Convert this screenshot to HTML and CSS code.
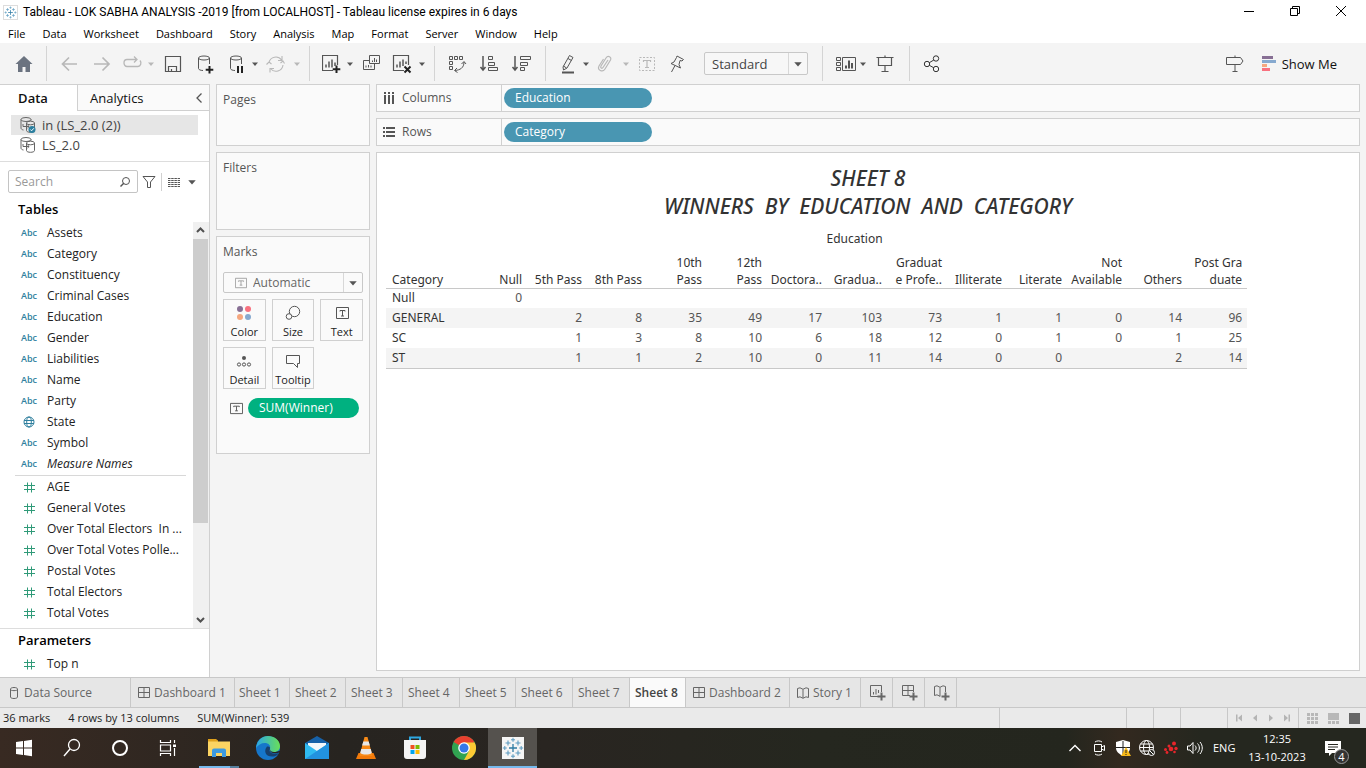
FILE: index.html
```html
<!DOCTYPE html>
<html lang="en">
<head>
<meta charset="utf-8">
<title>Tableau - LOK SABHA ANALYSIS -2019</title>
<link rel="stylesheet" href="styles.css">
</head>
<body>
<svg class="defs" aria-hidden="true">
  <symbol id="caret" viewBox="0 0 8 8"><path d="M1 2.500h6L4 6z" fill="currentColor"/></symbol>
  <symbol id="hash" viewBox="0 0 14 14"><path d="M5.500 2.500v10M9.500 2.500v10M2 5.500h11M2 9.500h11" stroke="#2f9a78" fill="none"/></symbol>
  <symbol id="tbox" viewBox="0 0 14 14"><path d="M.5 1.500h13v11H.5zM4 5.500V4.500h6v1M7 4.500v5M5.500 9.500h3" fill="none" stroke="currentColor"/></symbol>
  <symbol id="dash" viewBox="0 0 12 12"><path d="M.5.500h11v10H.5zM6 .5v10M.5 5.500h11" fill="none" stroke="currentColor"/></symbol>
  <symbol id="book" viewBox="0 0 12 12"><path d="M.5 1.500L3 .8l3 1.500 3-1.500 2.500.7v9L9 9.800l-3 1.500-3-1.500-2.500.7zM6 2.500v8.500" fill="none" stroke="currentColor"/></symbol>
  <symbol id="ds" viewBox="0 0 18 18"><g fill="none" stroke="#666"><ellipse cx="7" cy="3.500" rx="5" ry="2"/><path d="M2 3.500v8.500c0 1 1 1.800 2.500 2M12 3.500v1"/><ellipse cx="11.500" cy="7" rx="4" ry="1.800"/><path d="M7.500 7v7.500c0 2.400 8 2.400 8 0V7M4 10.500h6M8.500 9l1.700 1.500L8.500 12M4 8v2.500"/></g></symbol>
  <symbol id="logo" viewBox="0 0 22 22"><g fill="none"><path d="M11 7v8M7 11h8" stroke="#2f7ba3" stroke-width="1.300"/><path d="M6 3.500v5M3.500 6h5M16 3.500v5M13.500 6h5M6 13.500v5M3.500 16h5M16 13.500v5M13.500 16h5" stroke="#5b9abf" stroke-width="1.100"/><path d="M11 .8v4M9 2.800h4M11 17.200v4M9 19.200h4M.8 11h4M2.800 9v4M17.200 11h4M19.200 9v4" stroke="#5b9abf"/></g></symbol>
</svg>

<header class="titlebar">
  <svg class="applogo" viewBox="0 0 22 22"><use href="#logo"/></svg>
  <h1 class="wintitle">Tableau - LOK SABHA ANALYSIS -2019 [from LOCALHOST] - Tableau license expires in 6 days</h1>
  <div class="winbtns">
    <button aria-label="Minimize"><svg viewBox="0 0 12 12"><path d="M1 6.500h10" stroke="#000"/></svg></button>
    <button aria-label="Restore"><svg viewBox="0 0 12 12"><path d="M1.500 3.500h7v7h-7zM3.500 3.500v-2h7v7h-2" fill="none" stroke="#000"/></svg></button>
    <button aria-label="Close"><svg viewBox="0 0 12 12"><path d="M1 1l10 10M11 1L1 11" stroke="#000"/></svg></button>
  </div>
</header>
<nav class="menubar">
  <button>File</button><button>Data</button><button>Worksheet</button><button>Dashboard</button><button>Story</button><button>Analysis</button><button>Map</button><button>Format</button><button>Server</button><button>Window</button><button>Help</button>
</nav>

<div class="toolbar">
  <button aria-label="Home"><svg viewBox="0 0 20 20"><path d="M10 2L1.500 10H4v8h4.500v-5h3v5H16v-8h2.500z" fill="#6b7380"/></svg></button>
  <span class="sep g12"></span>
  <button class="g12 off" aria-label="Undo"><svg viewBox="0 0 20 20"><path d="M18 10H3.500M10 3.500L3.500 10l6.500 6.500" stroke-width="1.700"/></svg></button>
  <button class="g12 off" aria-label="Redo"><svg viewBox="0 0 20 20"><path d="M3 10h14.500M11.500 3.500L18 10l-6.500 6.500" stroke-width="1.700"/></svg></button>
  <button class="g12 off" aria-label="Replay"><svg viewBox="0 0 20 20"><path d="M7 5.500H4a3 3.500 0 0 0 0 7h11a3 3.500 0 0 0 2-6M7 5.500h6M11 2.500l3 3-3 3" stroke-width="1.300"/></svg></button>
  <svg class="caret g4 off"><use href="#caret"/></svg>
  <button class="g8" aria-label="Save"><svg viewBox="0 0 20 20"><path d="M2.500 2.500h15v15h-15zM5.500 17.500v-5h8v5M8.500 17.500v-2.500" stroke-width="1.200"/></svg></button>
  <button class="g12" aria-label="New data source"><svg viewBox="0 0 20 20"><ellipse cx="9" cy="4" rx="5.500" ry="2"/><path d="M3.500 4v10.500c0 1 2 2 4.500 2M14.500 4v6"/><path d="M14.500 12v7.500M10.700 15.700h7.600" stroke="#222" stroke-width="2"/></svg></button>
  <button class="g12" aria-label="Pause updates"><svg viewBox="0 0 20 20"><ellipse cx="9" cy="4" rx="5.500" ry="2"/><path d="M3.500 4v10.500c0 1 2 2 4.500 2M14.500 4v6"/><path d="M11 12v7M15 12v7" stroke="#222" stroke-width="2"/></svg></button>
  <svg class="caret g4"><use href="#caret"/></svg>
  <button class="g6 off" aria-label="Refresh"><svg viewBox="0 0 20 20"><path d="M4 8.500a7 7 0 0 1 12.500-2.500M18 11a7 7 0 0 1-12.500 3.500M17 2v4.500h-4M5 18.500v-4h4M15.500 9l2.500-2 1.500 2.500M1.500 10.500L4 8l2.500 2" stroke-width="1.100"/></svg></button>
  <svg class="caret g8 off"><use href="#caret"/></svg>
  <span class="sep g8"></span>
  <button class="g12" aria-label="New worksheet"><svg viewBox="0 0 20 20"><path d="M10.500 17.500h-11M-.5 17.500" stroke="none"/><path d="M11 16.500H.5v-15h15V11" stroke-width="1.200"/><path d="M4 13.500v-3M7 13.500v-6M10 13.500v-8M13 12V8.500" stroke-width="1.500"/><path d="M14.500 11.500V19M10.700 15.300h7.600" stroke="#222" stroke-width="2"/></svg></button>
  <svg class="caret g4"><use href="#caret"/></svg>
  <button class="g6" aria-label="Duplicate"><svg viewBox="0 0 20 20"><path d="M9.500 1.500h10v8h-10zM9.500 6.500h-6v9h11v-6M12.500 8V6.500M14.500 8V4M16.500 8V5.500M6 13.500v-2M8.500 13.500V11M11 13.500v-2"/></svg></button>
  <button class="g12" aria-label="Clear sheet"><svg viewBox="0 0 20 20"><path d="M12 16.500H1.500v-15h15V11" stroke-width="1.200"/><path d="M5 13.500v-3M8 13.500v-6M11 12V5.500M14 10V7.500" stroke-width="1.500"/><path d="M12.500 12.500l6 6M18.500 12.500l-6 6" stroke="#222" stroke-width="2"/></svg></button>
  <svg class="caret g6"><use href="#caret"/></svg>
  <span class="sep g8"></span>
  <button class="g12" aria-label="Swap rows and columns"><svg viewBox="0 0 20 20"><path d="M2.500 2.500h3v3h-3zM7.500 2.500h3v3h-3zM12.500 2.500h3v3h-3zM2.500 7.500h3v3h-3zM2.500 12.500h3v3h-3zM17 8c0 6-4 8-9 8.500M14.500 10L17 7.500l2 2.500M10 14l-2.500 2.500 3 2"/></svg></button>
  <button class="g12" aria-label="Sort ascending"><svg viewBox="0 0 20 20"><path d="M4 2v14M1.500 13L4 16l2.500-3" stroke-width="1.500"/><path d="M9.500 2.500h4v3h-4zM9.500 8.500h6v3h-6zM9.500 13.500h9v3h-9z"/></svg></button>
  <button class="g12" aria-label="Sort descending"><svg viewBox="0 0 20 20"><path d="M4 2v14M1.500 13L4 16l2.500-3" stroke-width="1.500"/><path d="M9.500 2.500h10v3h-10zM9.500 8.500h7v3h-7zM9.500 13.500h4v3h-4z"/></svg></button>
  <span class="sep g14"></span>
  <button class="g12" aria-label="Highlight"><svg viewBox="0 0 20 20"><path d="M5 13l6.500-11.500 3.500 2L9 14l-3.500 2zM5.500 12l3 2M10 4.500l3.500 2"/><path d="M4 18.500h12" stroke-width="2"/></svg></button>
  <svg class="caret g4"><use href="#caret"/></svg>
  <button class="g6 off" aria-label="Group"><svg viewBox="0 0 20 20"><path d="M12 6l-5 7.500c-1 1.500-3 .5-2-1.500L10 4c2-3 6-1 4.500 2L9 15c-2.500 4-8 1-6-3l4.500-7" stroke-width="1.200"/></svg></button>
  <svg class="caret g6 off"><use href="#caret"/></svg>
  <button class="g6 off" aria-label="Show mark labels"><svg viewBox="0 0 20 20"><path d="M3.500 3.500h15v13h-15z" stroke-dasharray="2 1.500"/><path d="M7.500 8V6.500h7V8M11 6.500v7M9 13.500h4" stroke-width="1.200"/></svg></button>
  <button class="g12" aria-label="Fix axes"><svg viewBox="0 0 20 20"><path d="M9 2l6.500 3.500-1.500 1.500-2-.5-1 4 1.500 3.500-9.500-4.500 3-1.500L8.500 3.500zM7 11.500L3.500 18"/></svg></button>
  <label class="fit g16"><select aria-label="Fit"><option>Standard</option></select><svg class="caret big"><use href="#caret"/></svg></label>
  <span class="sep g14"></span>
  <button class="g12 wide" aria-label="Show or hide cards"><svg viewBox="0 0 22 20"><path d="M1.500 3.500h4v3h-4zM1.500 8.500h4v3h-4zM1.500 13.500h4v3h-4zM7.500 3.500h13v13h-13z"/><path d="M11 14.500v-3M14 14.500v-8M17 14.500V9" stroke-width="2"/></svg></button>
  <svg class="caret g2"><use href="#caret"/></svg>
  <button class="g8" aria-label="Presentation mode"><svg viewBox="0 0 20 20"><path d="M1.500 3.500h17M3.500 3.500v8h13v-8M10 1.500v2M10 11.500v6M6.500 17.500h7" stroke-width="1.200"/></svg></button>
  <span class="sep g14"></span>
  <button class="g12 dark" aria-label="Share"><svg viewBox="0 0 20 20"><circle cx="5" cy="10" r="2.700"/><circle cx="14" cy="4.500" r="2.700"/><circle cx="14" cy="15" r="2.700"/><path d="M7.300 8.700l4.500-2.700M7.300 11.300l4.500 2.500"/></svg></button>
  <button class="guide" aria-label="Guide"><svg viewBox="0 0 20 20"><path d="M2.500 3.500h14l2.500 3.500-2.500 3.500h-14zM11 1.500v2M11 10.500v7M8.500 17.500h5"/></svg></button>
  <button class="showme"><svg viewBox="0 0 14 16"><path d="M0 0h11v3H0z" fill="#876f94"/><path d="M0 4h14v3H0z" fill="#86a9cf"/><path d="M0 8h5v3H0z" fill="#f5a77f"/><path d="M0 12h8v3H0z" fill="#f8717f"/></svg>Show Me</button>
</div>

<main class="work">
  <aside class="side">
    <div class="sidetabs"><button class="on">Data</button><button class="ana">Analytics<svg viewBox="0 0 8 12"><path d="M6.500 1.500L2 6l4.500 4.500" fill="none" stroke="#555" stroke-width="1.300"/></svg></button></div>
    <ul class="sources">
      <li class="sel"><svg viewBox="0 0 18 18"><use href="#ds"/><circle cx="13" cy="13.500" r="3.500" fill="#2b7f9f"/><path d="M11.300 13.500l1.300 1.300 2.200-2.500" fill="none" stroke="#fff"/></svg>in (LS_2.0 (2))</li>
      <li><svg viewBox="0 0 18 18"><use href="#ds"/></svg>LS_2.0</li>
    </ul>
    <div class="find">
      <label class="search"><input type="text" placeholder="Search" aria-label="Search"><svg viewBox="0 0 12 12"><path d="M5 7L1.500 10.500" stroke="#555" stroke-width="1.400"/><circle cx="7" cy="5" r="3.500" fill="none" stroke="#555"/></svg></label>
      <button aria-label="Filter"><svg viewBox="0 0 14 14"><path d="M1 1.500h12L8.500 7v5.500h-3V7z" fill="none" stroke="#555"/></svg></button>
      <span class="fsep"></span>
      <button class="viewas" aria-label="View options"><svg viewBox="0 0 14 12"><path d="M1 2.500h12M1 4.500h12M1 6.500h12M1 8.500h12M1 10.500h12" stroke="#555" stroke-dasharray="2.500 .7"/></svg></button>
      <svg class="caret big"><use href="#caret"/></svg>
    </div>
    <h2>Tables</h2>
    <div class="scroller">
      <div class="fields">
        <ul>
          <li><b>Abc</b>Assets</li><li><b>Abc</b>Category</li><li><b>Abc</b>Constituency</li><li><b>Abc</b>Criminal Cases</li><li><b>Abc</b>Education</li><li><b>Abc</b>Gender</li><li><b>Abc</b>Liabilities</li><li><b>Abc</b>Name</li><li><b>Abc</b>Party</li>
          <li><svg viewBox="0 0 14 14"><g fill="none" stroke="#2f7f9e"><circle cx="7" cy="7" r="5"/><ellipse cx="7" cy="7" rx="2.300" ry="5"/><path d="M2 5.500h10M2 8.500h10"/></g></svg>State</li>
          <li><b>Abc</b>Symbol</li><li><b>Abc</b><i>Measure Names</i></li>
        </ul>
        <ul class="measures">
          <li><svg viewBox="0 0 14 14"><use href="#hash"/></svg>AGE</li><li><svg viewBox="0 0 14 14"><use href="#hash"/></svg>General Votes</li><li><svg viewBox="0 0 14 14"><use href="#hash"/></svg>Over Total Electors&nbsp; In ...</li><li><svg viewBox="0 0 14 14"><use href="#hash"/></svg>Over Total Votes Polle...</li><li><svg viewBox="0 0 14 14"><use href="#hash"/></svg>Postal Votes</li><li><svg viewBox="0 0 14 14"><use href="#hash"/></svg>Total Electors</li><li><svg viewBox="0 0 14 14"><use href="#hash"/></svg>Total Votes</li>
        </ul>
      </div>
      <div class="bar" aria-hidden="true">
        <svg viewBox="0 0 15 17"><path d="M4 10l3.500-3.500L11 10" fill="none" stroke="#505050" stroke-width="2"/></svg>
        <span class="thumb"></span>
        <svg viewBox="0 0 15 17"><path d="M4 7l3.500 3.500L11 7" fill="none" stroke="#505050" stroke-width="2"/></svg>
      </div>
    </div>
    <div class="params">
      <h2>Parameters</h2>
      <ul><li><svg viewBox="0 0 14 14"><use href="#hash"/></svg>Top n</li></ul>
    </div>
  </aside>

  <div class="cards">
    <section class="card pages"><h3>Pages</h3></section>
    <section class="card filters"><h3>Filters</h3></section>
    <section class="card marks">
      <h3>Marks</h3>
      <label class="marktype"><svg class="ic" viewBox="0 0 14 14"><use href="#tbox"/></svg><select aria-label="Mark type"><option>Automatic</option></select><svg class="caret big"><use href="#caret"/></svg></label>
      <div class="markgrid">
        <button><svg viewBox="0 0 20 18"><circle cx="6" cy="5" r="3" fill="#876f94"/><circle cx="14" cy="5" r="3" fill="#f8717f"/><circle cx="6" cy="13" r="3" fill="#f5a77f"/><circle cx="14" cy="13" r="3" fill="#86a9cf"/></svg>Color</button>
        <button><svg viewBox="0 0 20 18"><g fill="none" stroke="#555"><circle cx="11.500" cy="7.500" r="5.200"/><circle cx="6" cy="12.500" r="2.800" fill="#fafafa"/></g></svg>Size</button>
        <button><svg viewBox="0 0 20 18"><g fill="none" stroke="#555"><path d="M4.500 3.500h12v11h-12zM8 7.500v-1h5v1M10.500 6.500v5.500M9 12h3"/></g></svg>Text</button>
        <button><svg viewBox="0 0 20 18"><circle cx="10" cy="6" r="2" fill="#555"/><g fill="none" stroke="#555"><circle cx="5" cy="12.500" r="1.600"/><circle cx="10" cy="12.500" r="1.600"/><circle cx="15" cy="12.500" r="1.600"/></g></svg>Detail</button>
        <button><svg viewBox="0 0 20 18"><path d="M3.500 3.500h13v8h-2v4l-4-4h-7z" fill="none" stroke="#555"/></svg>Tooltip</button>
      </div>
      <div class="markpill"><svg viewBox="0 0 14 14"><use href="#tbox"/></svg><button class="pill green">SUM(Winner)</button></div>
    </section>
  </div>

  <div class="canvas">
    <div class="shelf"><div class="shelfname"><svg viewBox="0 0 12 12"><path d="M1 0h2v2H1zM5 0h2v2H5zM9 0h2v2H9zM1 3h2v9H1zM5 3h2v9H5zM9 3h2v9H9z" fill="#555"/></svg>Columns</div><button class="pill">Education</button></div>
    <div class="shelf"><div class="shelfname"><svg viewBox="0 0 12 12"><path d="M0 1h2v2H0zM0 5h2v2H0zM0 9h2v2H0zM3 1h9v2H3zM3 5h9v2H3zM3 9h9v2H3z" fill="#555"/></svg>Rows</div><button class="pill">Category</button></div>
    <section class="sheet">
      <h2>SHEET 8<br>WINNERS&nbsp; BY&nbsp; EDUCATION&nbsp; AND&nbsp; CATEGORY</h2>
      <table>
        <colgroup><col class="c0"><col span="13"></colgroup>
        <thead>
          <tr class="top"><td></td><th colspan="13">Education</th></tr>
          <tr><th class="l">Category</th><th>Null</th><th>5th Pass</th><th>8th Pass</th><th>10th<br>Pass</th><th>12th<br>Pass</th><th>Doctora..</th><th>Gradua..</th><th>Graduat<br>e Profe..</th><th>Illiterate</th><th>Literate</th><th>Not<br>Available</th><th>Others</th><th>Post Gra<br>duate</th></tr>
        </thead>
        <tbody>
          <tr><th>Null</th><td>0</td><td></td><td></td><td></td><td></td><td></td><td></td><td></td><td></td><td></td><td></td><td></td><td></td></tr>
          <tr><th>GENERAL</th><td></td><td>2</td><td>8</td><td>35</td><td>49</td><td>17</td><td>103</td><td>73</td><td>1</td><td>1</td><td>0</td><td>14</td><td>96</td></tr>
          <tr><th>SC</th><td></td><td>1</td><td>3</td><td>8</td><td>10</td><td>6</td><td>18</td><td>12</td><td>0</td><td>1</td><td>0</td><td>1</td><td>25</td></tr>
          <tr><th>ST</th><td></td><td>1</td><td>1</td><td>2</td><td>10</td><td>0</td><td>11</td><td>14</td><td>0</td><td>0</td><td></td><td>2</td><td>14</td></tr>
        </tbody>
      </table>
    </section>
  </div>
</main>

<nav class="tabs">
  <button class="src"><svg viewBox="0 0 12 12"><path d="M2.500 2c0-2 7-2 7 0v8c0 2-7 2-7 0zM2.500 2.500c0 1.500 7 1.500 7 0" fill="none" stroke="currentColor"/></svg>Data Source</button>
  <button class="dash"><svg viewBox="0 0 12 12"><use href="#dash"/></svg>Dashboard 1</button>
  <button class="s1">Sheet 1</button><button>Sheet 2</button><button>Sheet 3</button><button>Sheet 4</button><button>Sheet 5</button><button>Sheet 6</button><button>Sheet 7</button><button class="on">Sheet 8</button>
  <button class="dash"><svg viewBox="0 0 12 12"><use href="#dash"/></svg>Dashboard 2</button>
  <button class="story"><svg viewBox="0 0 12 12"><use href="#book"/></svg>Story 1</button>
  <button class="add" aria-label="New worksheet"><svg viewBox="0 0 16 16"><path d="M8 11.500H.5V.5h11V7M3.500 9.500V7M6 9.500V4M8.500 8V5" fill="none" stroke="currentColor"/><path d="M11.500 7.500v8M7.500 11.500h8" stroke="currentColor" stroke-width="2"/></svg></button>
  <button class="add" aria-label="New dashboard"><svg viewBox="0 0 16 16"><path d="M8 10.500H.5V.5h11V7M6 .5v10M.5 5.500h11" fill="none" stroke="currentColor"/><path d="M11.500 7.500v8M7.500 11.500h8" stroke="currentColor" stroke-width="2"/></svg></button>
  <button class="add" aria-label="New story"><svg viewBox="0 0 16 16"><path d="M6 11.300L3 9.800l-2.500.7v-9L3 .8l3 1.500L9 .8l2.500.7V7M6 2.500v9" fill="none" stroke="currentColor"/><path d="M11.500 7.500v8M7.500 11.500h8" stroke="currentColor" stroke-width="2"/></svg></button>
</nav>

<footer class="status">
  <span>36 marks</span><span>4 rows by 13 columns</span><span>SUM(Winner): 539</span>
  <div class="boxes"><i class="b1"></i><i class="b2"></i><i class="b2"></i><i class="b3"></i>
    <div class="step">
      <button aria-label="First"><svg viewBox="0 0 8 8"><path d="M1 .5h1.500v7H1zM7 .5v7L3 4z"/></svg></button>
      <button aria-label="Previous"><svg viewBox="0 0 8 8"><path d="M6 .5v7L2 4z"/></svg></button>
      <button aria-label="Next"><svg viewBox="0 0 8 8"><path d="M2 .5v7L6 4z"/></svg></button>
      <button aria-label="Last"><svg viewBox="0 0 8 8"><path d="M1 .5v7L5 4zM5.500.5H7v7H5.500z"/></svg></button>
    </div>
    <div class="views">
      <button aria-label="Sheet sorter"><svg viewBox="0 0 11 11"><path d="M0 0h3v3H0zM4 0h3v3H4zM8 0h3v3H8zM0 4h3v3H0zM4 4h3v3H4zM8 4h3v3H8zM0 8h3v3H0zM4 8h3v3H4zM8 8h3v3H8z"/></svg></button>
      <button aria-label="Filmstrip"><svg viewBox="0 0 11 11"><path d="M0 0h11v7H0zM0 8h3v3H0zM4 8h3v3H4zM8 8h3v3H8z"/></svg></button>
      <button class="cur" aria-label="Tabs"><svg viewBox="0 0 11 11"><path d="M0 0h11v11H0z"/></svg></button>
    </div>
  </div>
</footer>

<footer class="taskbar">
  <button class="sys" aria-label="Start"><svg viewBox="0 0 24 24"><path d="M4 6l7-1v6.500H4zM12 4.900l8-1.100v7.700h-8zM4 12.500h7V19l-7-1zM12 12.500h8v7.700l-8-1.100z" fill="#fff"/></svg></button>
  <button class="sys" aria-label="Search"><svg viewBox="0 0 24 24"><circle cx="14" cy="9" r="5.500" fill="none" stroke="#fff" stroke-width="1.300"/><path d="M10 13l-6 7" stroke="#fff" stroke-width="1.400"/></svg></button>
  <button class="sys" aria-label="Cortana"><svg viewBox="0 0 24 24"><circle cx="12" cy="12" r="7" fill="none" stroke="#fff" stroke-width="2"/></svg></button>
  <button class="sys" aria-label="Task view"><svg viewBox="0 0 24 24"><path d="M4.500 4v2.500h10V4M4.500 9h10v6h-10zM4.500 20v-2.500h10V20M18.500 4v3M18.500 12v8" fill="none" stroke="#fff" stroke-width="1.200"/><path d="M17 8.500h3v2.500h-3z" fill="#fff"/></svg></button>
  <button class="app first" aria-label="File Explorer"><svg viewBox="0 0 24 24"><path d="M1 3h8l2 1.500v2H1z" fill="#e0a11c"/><path d="M1 5.500h22V20H1z" fill="#fcd462"/><path d="M5 14.500a2 2 0 0 1 2-2h10a2 2 0 0 1 2 2V21h-4v-4H9v4H5z" fill="#3d9ae0"/></svg></button>
  <button class="app" aria-label="Edge"><svg viewBox="0 0 24 24"><defs><linearGradient id="e1"><stop offset="0" stop-color="#2aa6e8"/><stop offset="1" stop-color="#69df58"/></linearGradient></defs><circle cx="12" cy="12" r="12" fill="#1676ca"/><path d="M0 12C1 4 6 0 12 0s12 4 12 10c0 4-3 6-6 6s-5-1-4-3c1-4-2-6-5-6-4 0-7 2-9 5z" fill="url(#e1)"/><path d="M14 12c-2 4 2 7 9 5-1 2-3 3-5 3.500-8 1-11-5-7-10 2 0 3 .500 3 1.500z" fill="#17406d"/><path d="M14 12c-1.500 4 3 6.500 9.500 4.500l1-2-5 1.500c-4 .5-6-1-5.500-4z" fill="#272420"/></svg></button>
  <button class="app" aria-label="Mail"><svg viewBox="0 0 24 24"><path d="M0 7l12-7 12 7v4H0z" fill="#1761a8"/><path d="M3 7h18v8H3z" fill="#f3f7fa"/><path d="M0 7l12 8 12-8v16H0z" fill="#2fbaf0"/><path d="M0 23L24 7v16z" fill="#2292de"/></svg></button>
  <button class="app" aria-label="VLC"><svg viewBox="0 0 24 24"><path d="M4.500 17h15l2.500 6H2z" fill="#f27a0a"/><path d="M10.500 1h3L18.500 20h-13z" fill="#f88a17"/><path d="M9.300 5.500h5.400l1.200 4H8.100zM7.200 13h9.600l1 4c-3 2-8.600 2-11.600 0z" fill="#e8e8e8"/></svg></button>
  <button class="app" aria-label="Microsoft Store"><svg viewBox="0 0 24 24"><path d="M7 6V1.500h10V6" fill="none" stroke="#2ea7e0" stroke-width="2"/><path d="M1 4h22v16a3 3 0 0 1-3 3H4a3 3 0 0 1-3-3z" fill="#f4f4f4"/><path d="M7.500 9h4v4h-4z" fill="#f25022"/><path d="M12.500 9h4v4h-4z" fill="#7fba00"/><path d="M7.500 14h4v4h-4z" fill="#00a4ef"/><path d="M12.500 14h4v4h-4z" fill="#ffb900"/></svg></button>
  <button class="app" aria-label="Chrome"><svg viewBox="0 0 24 24"><circle cx="12" cy="12" r="12" fill="#31a351"/><path d="M12 12L1.600 6A12 12 0 0 1 22.400 6z" fill="#e8402f"/><path d="M12 6.500h10.700A12 12 0 0 1 12 24l5-9z" fill="#fcc934"/><circle cx="12" cy="12" r="5.800" fill="#fff"/><circle cx="12" cy="12" r="4.500" fill="#3578e8"/></svg></button>
  <button class="app active" aria-label="Tableau"><svg viewBox="0 0 22 22"><path d="M0 0h22v22H0z" fill="#f5f5f5"/><use href="#logo"/></svg></button>
  <div class="tray">
    <svg viewBox="0 0 16 16"><path d="M2.500 11L8 5.500l5.500 5.500" fill="none" stroke="#fff" stroke-width="1.400"/></svg>
    <svg viewBox="0 0 16 16"><path d="M3.500 4.500h7v7h-7zM10.500 7l3-1.500v5l-3-1.500M4 2c2-1.500 5-1.500 7 0M4 14c2 1.500 5 1.500 7 0" fill="none" stroke="#fff"/></svg>
    <svg viewBox="0 0 16 16"><path d="M8 0l7 2v6c0 4-4 6.500-7 8-3-1.500-7-4-7-8V2z" fill="#fff"/><path d="M8 1v14M1 7.500h14" stroke="#222"/><path d="M11 7l5 9H6z" fill="#f7b818"/><path d="M11 10v3M11 14v1" stroke="#222"/></svg>
    <svg viewBox="0 0 16 16"><g fill="none" stroke="#fff"><circle cx="7.500" cy="7.500" r="7"/><ellipse cx="7.500" cy="7.500" rx="3" ry="7"/><path d="M.5 7.500h14M1.500 4h12M1.500 11h8"/><circle cx="12.500" cy="12.500" r="3" fill="#272720"/><path d="M10.500 10.500l4 4"/></g></svg>
    <svg viewBox="0 0 16 16"><g fill="#e8252b"><circle cx="2.500" cy="9.500" r="1.500"/><circle cx="6" cy="6" r="1.500"/><circle cx="11" cy="3.500" r="2"/><circle cx="8" cy="9" r="2.300"/><circle cx="13" cy="8.500" r="1.700"/><circle cx="4" cy="12.500" r="1.400"/><circle cx="11.500" cy="12" r="1.300"/></g></svg>
    <svg viewBox="0 0 16 16"><path d="M.5 6h2.500l3-3.500v11L3 10H.5zM8 5.500c1.500 1.500 1.500 3.500 0 5M10.500 3.500c2.500 2.500 2.500 6.500 0 9M13 2c3 3.500 3 8.500 0 12" fill="none" stroke="#fff"/></svg>
    <span class="lang">ENG</span>
    <time>12:35<br>13-10-2023</time>
    <button class="notes" aria-label="Notifications"><svg viewBox="0 0 16 16"><path d="M0 1h16v12H7l-3 3v-3H0z" fill="#fff"/><path d="M3 4.500h10M3 7h10M3 9.500h7" stroke="#272720"/></svg><span class="badge">4</span></button>
  </div>
</footer>
</body>
</html>
```
FILE: styles.css
```css
* { box-sizing: border-box; }
body { margin: 0; height: 100vh; display: flex; flex-direction: column; background: #f4f4f4; font: 12px/20px "Open Sans", "Noto Sans", sans-serif; color: #222; overflow: hidden; }
button { font: inherit; color: inherit; background: none; border: 0; padding: 0; margin: 0; border-radius: 0; }
h1, h2, h3, ul { margin: 0; padding: 0; font-weight: 400; }
ul { list-style: none; }
svg { display: block; flex: none; }
.defs { position: absolute; width: 0; height: 0; }
.caret { width: 8px; height: 8px; color: #555; }
.caret.big { width: 10px; height: 10px; }

.titlebar { display: flex; align-items: center; height: 24px; padding: 0 2px 0 3px; background: #fff; color: #000; flex: none; }
.applogo { width: 15px; height: 15px; border: 1px solid #ddd; }
.wintitle { font-family: Roboto, sans-serif; font-size: 12px; padding-left: 5px; flex: 1; }
.winbtns { display: flex; padding-bottom: 2px; }
.winbtns button { width: 46px; height: 20px; display: grid; place-items: center; }
.winbtns svg { width: 12px; height: 12px; }
.menubar { display: flex; height: 19px; padding-left: 8px; gap: 17px; background: #fff; color: #000; flex: none; font-size: 11px; }
.menubar button { height: 19px; }

.toolbar { display: flex; align-items: center; height: 41px; padding: 0 29px 0 14px; flex: none; color: #555; }
.toolbar button { width: 20px; height: 20px; flex: none; }
.toolbar button svg { width: 20px; height: 20px; fill: none; stroke: currentColor; }
.toolbar button:first-child svg { stroke: none; }
.toolbar .wide, .toolbar .wide svg { width: 22px; }
.toolbar .off { color: #b8b8b8; }
.toolbar .dark { color: #333; }
.sep { width: 1px; height: 35px; background: #d4d4d4; }
.g2 { margin-left: 2px; } .g4 { margin-left: 4px; } .g6 { margin-left: 6px; } .g8 { margin-left: 8px; } .g12 { margin-left: 12px; } .g14 { margin-left: 14px; } .g16 { margin-left: 16px; }
.fit, .marktype { display: flex; align-items: center; border: 1px solid #c8c8c8; border-radius: 2px; background: #fafafa; }
.fit { width: 104px; height: 23px; background: #f7f7f7; }
select { appearance: none; flex: 1; min-width: 0; align-self: stretch; border: 0; border-right: 1px solid #d8d8d8; background: none; font: inherit; color: #444; }
.fit select { font-size: 13px; padding: 0 7px; }
.fit .caret, .marktype .caret { margin: 0 4px; }
.toolbar .guide { margin-left: auto; }
.toolbar .showme { display: flex; align-items: center; gap: 6px; width: auto; margin-left: 18px; font-size: 13px; color: #111; }
.toolbar .showme svg { width: 14px; height: 16px; stroke: none; }

.work { flex: 1; min-height: 0; display: flex; gap: 6px; padding-right: 6px; }
.side { width: 210px; flex: none; background: #fff; border: solid #d0d0d0; border-width: 1px 1px 0 0; display: flex; flex-direction: column; min-height: 0; }
.sidetabs { display: flex; height: 26px; font-size: 13px; color: #111; flex: none; }
.sidetabs .on { width: 77px; font-weight: 600; padding-right: 11px; }
.sidetabs .ana { flex: 1; display: flex; align-items: center; justify-content: space-between; padding: 0 6px 0 12px; background: #fafafa; border: solid #d0d0d0; border-width: 0 0 1px 1px; }
.sidetabs svg { width: 8px; height: 12px; }
.sources { padding: 4px 11px 6px; border-bottom: 1px solid #ddd; font-size: 13px; color: #444; flex: none; }
.sources li { display: flex; align-items: center; gap: 5px; height: 20px; padding-left: 8px; }
.sources svg { width: 18px; height: 18px; }
.sources .sel { background: #e6e6e6; }
.find { display: flex; align-items: center; padding: 8px 0 6px 8px; flex: none; }
.search { display: flex; align-items: center; width: 130px; height: 23px; border: 1px solid #c4c4c4; border-radius: 2px; padding: 0 6px; }
.search input { flex: 1; min-width: 0; border: 0; padding: 0; font: inherit; outline: 0; }
.search input::placeholder { color: #999; }
.search svg { width: 12px; height: 12px; }
.find button { margin-left: 4px; }
.find button svg { width: 14px; height: 14px; }
.find .fsep { width: 1px; height: 18px; background: #d0d0d0; margin-left: 5px; }
.find .viewas { margin-left: 5px; }
.find .caret { margin-left: 6px; }
.side h2 { font-size: 13px; font-weight: 600; color: #000; padding-left: 18px; line-height: 20px; }
.scroller { flex: 1; min-height: 0; display: flex; padding-top: 3px; }
.fields { flex: 1; overflow: hidden; white-space: nowrap; }
.side .fields li, .params li { display: flex; align-items: center; height: 21px; padding-left: 21px; }
.fields b { width: 26px; font-size: 9px; font-weight: 600; color: #2f7f9e; }
.fields li svg, .params li svg { width: 14px; height: 14px; margin: 0 11px 0 1px; }
.measures { margin-left: 15px; margin-right: 7px; border-top: 1px solid #d8d8d8; }
.side .measures li { padding-left: 6px; }
.fields ul + ul { margin-top: 1px; }
.bar { width: 16px; background: #f0f0f0; display: flex; flex-direction: column; }
.bar svg { width: 15px; height: 17px; }
.bar .thumb { flex: 0 0 70%; background: #cdcdcd; margin-bottom: auto; margin-right: 1px; }
.params { border-top: 1px solid #ddd; padding-bottom: 3px; flex: none; }
.params h2 { line-height: 22px; margin-bottom: 2px; }

.cards { width: 154px; flex: none; display: flex; flex-direction: column; gap: 6px; }
.card { background: #fafafa; border: 1px solid #d0d0d0; padding: 5px 6px; }
.card h3 { font-size: 12px; color: #555; }
.pages { height: 62px; } .filters { height: 78px; } .marks { height: 218px; }
.marktype { height: 21px; margin-top: 10px; }
.marktype .ic { width: 12px; height: 12px; margin: 0 6px 0 11px; color: #999; }
.marktype select { color: #666; }
.markgrid { display: grid; grid-template-columns: repeat(3, 1fr); gap: 6px; padding-top: 6px; }
.markgrid button { height: 42px; border: 1px solid #d0d0d0; display: flex; flex-direction: column; align-items: center; font-size: 11px; line-height: 20px; padding-top: 4px; }
.markgrid svg { width: 20px; height: 18px; }
.markpill { display: flex; align-items: center; gap: 5px; padding: 9px 4px 0 7px; }
.markpill svg { width: 13px; height: 13px; color: #555; }
.pill { height: 20px; width: 148px; border-radius: 10px; padding: 0 11px; text-align: left; background: #4996b2; color: #fff; line-height: 20px; }
.pill.green { background: #00b180; flex: 1; }

.canvas { flex: 1; min-width: 0; display: flex; flex-direction: column; gap: 6px; padding-bottom: 6px; }
.shelf { display: flex; align-items: center; gap: 2px; height: 28px; background: #fafafa; border: 1px solid #d0d0d0; flex: none; }
.shelfname { display: flex; align-items: center; gap: 7px; width: 125px; height: 26px; padding-left: 6px; border-right: 1px solid #d0d0d0; color: #555; }
.shelfname svg { width: 12px; height: 12px; }
.sheet { flex: 1; background: #fff; border: 1px solid #d0d0d0; padding: 11px 9px; font-family: "Noto Sans", sans-serif; overflow: hidden; }
.sheet h2 { font-size: 21px; line-height: 28px; font-weight: 500; font-style: italic; text-align: center; color: #333; }
table { table-layout: fixed; border-collapse: collapse; width: 861px; margin-top: 9px; color: #555; }
col { width: 60px; } col.c0 { width: 81px; }
th { font-weight: 400; color: #333; }
th, td { text-align: right; padding: 0 5px; height: 20px; line-height: 18px; white-space: nowrap; }
thead th { vertical-align: bottom; line-height: 17px; padding-left: 0; }
thead .top th { text-align: center; height: 24px; vertical-align: top; line-height: 20px; }
thead tr:last-child { height: 35px; border-bottom: 1px solid #c8c8c8; }
thead .l, tbody th { text-align: left; padding-left: 6px; }
tbody tr:nth-child(even) { background: #f4f4f4; }
tbody tr:last-child { border-bottom: 1px solid #c8c8c8; }

.tabs { display: flex; height: 31px; flex: none; background: #e6e6e6; border: solid #c8c8c8; border-width: 1px 0; color: #666; }
.tabs button { display: flex; align-items: center; justify-content: flex-start; gap: 5px; width: 57px; padding-left: 5px; border-right: 1px solid #c8c8c8; white-space: nowrap; }
.tabs button:nth-child(3n+1) { width: 56px; }
.tabs button svg { width: 12px; height: 12px; }
.tabs button.src { width: 131px; padding-left: 8px; gap: 4px; }
.tabs button.dash { width: 104px; padding-left: 7px; gap: 4px; }
.tabs button.s1 { width: 55px; padding-left: 4px; }
.tabs button.story { width: 71px; padding-left: 7px; gap: 4px; }
.tabs .on { background: #fafafa; font-weight: 600; color: #444; }
.tabs button.add { width: 32px; padding-left: 9px; }
.tabs .add svg { width: 16px; height: 16px; }

.status { display: flex; height: 20px; gap: 18px; padding-left: 3px; background: #eaeaea; color: #222; flex: none; font-size: 11px; }
.boxes { margin-left: auto; display: flex; }
.boxes i { border-left: 1px solid #c8c8c8; }
.b1 { width: 127px; } .b2 { width: 27px; } .b3 { width: 47px; }
.step { display: flex; align-items: center; gap: 8px; width: 71px; padding-left: 7px; border-left: 1px solid #c8c8c8; }
.views { display: flex; align-items: center; gap: 10px; width: 68px; padding-left: 8px; border-left: 1px solid #c8c8c8; }
.step svg { width: 8px; height: 8px; fill: #b4b4b4; }
.views svg { width: 11px; height: 11px; fill: #b8b8b8; }
.views .cur svg { fill: #666; }

.taskbar { display: flex; height: 40px; flex: none; background: linear-gradient(90deg, #382a22, #272420 25%, #292521 40%, #25271f 60%, #24261e 78%, #33291f 82%, #25271f 88%); color: #fff; }
.taskbar > button { display: grid; place-items: center; height: 40px; }
.sys { width: 48px; }
.sys svg { width: 24px; height: 24px; }
.app { width: 49px; }
.app svg { width: 24px; height: 24px; }
.first { margin-left: 2px; background: linear-gradient(90deg, #76b9ed 78%, #567f9d 78%) 5px 100% / 40px 2px no-repeat; }
.active { background: #55524e; box-shadow: inset 0 -2px #76b9ed; }
.active svg { width: 22px; height: 22px; }
.tray { margin-left: auto; display: flex; align-items: center; gap: 8px; padding-right: 17px; }
.tray > svg { width: 16px; height: 16px; }
.tray time { width: 60px; text-align: center; line-height: 18px; font-size: 11px; }
.lang { width: 28px; padding-left: 2px; font-size: 11px; }
.notes { position: relative; width: 24px; height: 24px; margin-left: 10px; }
.notes svg { width: 16px; height: 16px; }
.badge { position: absolute; right: 0; bottom: -4px; width: 15px; height: 15px; border-radius: 50%; border: 1px solid #999; background: #333; font-size: 11px; line-height: 13px; text-align: center; }
```
